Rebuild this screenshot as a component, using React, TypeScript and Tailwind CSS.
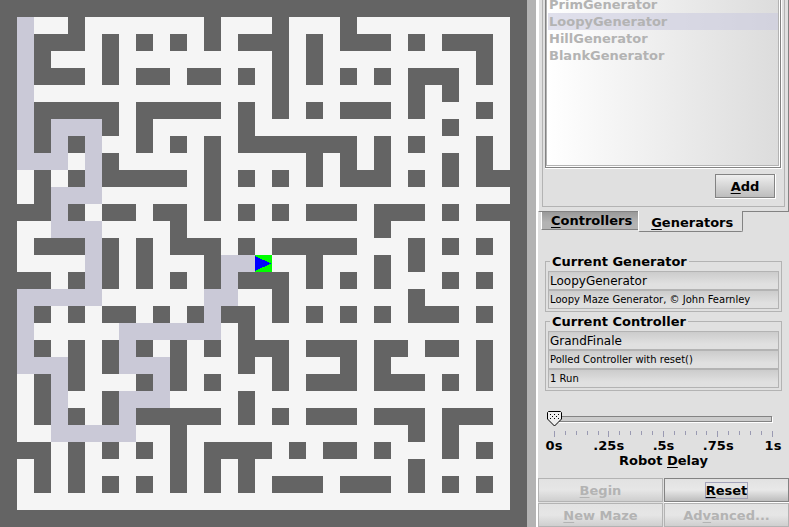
import { useState, type ReactNode } from 'react';

const MAZE = [
  '###############################',
  '#o..#.......#...#...#.........#',
  '#o###.#.#.#.#.###.#.###.#.###.#',
  '#o#...#.........#.#.........#.#',
  '#o###.#.##.##.#.#.#.#.#.###.#.#',
  '#o..............#.......#.#...#',
  '#o#####.#####.#.#.#.###.#...#.#',
  '#o#ooo#.#.....#...........#...#',
  '#o#o#o..#.#.#.#######.#.#...#.#',
  '#ooo.o#.....#.....#.#.#...#.#.#',
  '#.#.#o#####.#.#.#.#.###.#.#.###',
  '#.#ooo......#.................#',
  '###o#.##.##.#.#.#.###.###.#.###',
  '#..ooo....#...........#.......#',
  '#.###o#.#.###.#.#####...#.#.#.#',
  '#....o#.#...#oo...#...#.#.....#',
  '###.#o#.#.#.#o###.#.#.#...#.#.#',
  '#ooooo......oo..#.......#.....#',
  '#o#.#.##.#.#o##.#.#.#.#.###.#.#',
  '#o.....oooooo.#...............#',
  '#o#.#.#o#.#.#.###.###.##.##.#.#',
  '#ooo#.#ooo#...#.#...#.#.....#.#',
  '#.#o#...#o#.#...#.###.###.#.#.#',
  '#.#o..#ooo....#...............#',
  '#.#o#.#o#####.#.#.###.###.###.#',
  '#..ooooo..#.............#.#...#',
  '###.#.#.#.#.####.#.##.#...#.#.#',
  '#.#.#.....#.#.#.........#.....#',
  '#.#.#.#.#.#.#.#.###.###.#.#.#.#',
  '#.............................#',
  '###############################',
];
const CELL = 17;
const FILLS: Record<string, string> = { '#': '#646464', o: '#cac9d7' };
const ROBOT = { x: 15, y: 15 };

function Maze() {
  const size = MAZE.length * CELL;
  return (
    <svg
      className="block w-[527px] shrink-0 self-start"
      viewBox={`0 0 ${size} ${size}`}
      shapeRendering="crispEdges"
      role="img"
      aria-label="Maze"
    >
      <rect width={size} height={size} fill="#f5f5f5" />
      {MAZE.flatMap((row, y) =>
        Array.from(row.matchAll(/#+|o+/g), (run) => (
          <rect
            key={`${y}-${run.index}`}
            x={run.index * CELL}
            y={y * CELL}
            width={run[0].length * CELL}
            height={CELL}
            fill={FILLS[run[0][0]]}
          />
        )),
      )}
      <g transform={`translate(${ROBOT.x * CELL} ${ROBOT.y * CELL})`}>
        <rect width={CELL} height={CELL} fill="#00ff00" />
        <path d="M0 1 L16 8.5 L0 16 Z" fill="#0000ff" />
      </g>
    </svg>
  );
}

function Key({ children }: { children: ReactNode }) {
  return <span className="underline decoration-1 underline-offset-2">{children}</span>;
}

const GENERATORS = ['PrimGenerator', 'LoopyGenerator', 'HillGenerator', 'BlankGenerator'];

function GeneratorPanel() {
  return (
    <div className="flex min-h-0 flex-1 flex-col border-r border-b border-l border-r-[#838383] border-b-[#838383] border-l-white px-[3px] pb-1">
      <div className="flex min-h-0 flex-1 flex-col border-x border-b border-[#b3b3b3] px-0.5 pb-[7px]">
        <div className="min-h-0 flex-1 overflow-hidden border-r border-b border-white">
          <div className="h-full border-r border-b border-l border-[#838383]">
            <div className="h-full border-r border-b border-white">
              <div className="h-full overflow-hidden border-x border-b border-[#b3b3b3] bg-linear-to-r from-white to-[#dcdcdc] pl-px">
                <ul className="-mt-1 text-[#b3b3b3]">
                  {GENERATORS.map((name) => (
                    <li
                      key={name}
                      className={
                        name === 'LoopyGenerator'
                          ? 'h-[17px] bg-[#ccccdf]/60 pl-px leading-[17px]'
                          : 'h-[17px] pl-px leading-[17px]'
                      }
                    >
                      {name}
                    </li>
                  ))}
                </ul>
              </div>
            </div>
          </div>
        </div>
        <div className="flex justify-end pt-[5px] pr-1.5">
          <div className="border-r border-b border-white">
            <button className="block h-6 w-[60px] border border-[#838383] bg-linear-to-b from-[#efefef] to-[#bdbdbd] pt-px font-bold">
              <Key>A</Key>dd
            </button>
          </div>
        </div>
      </div>
    </div>
  );
}

function Tabs() {
  return (
    <div role="tablist" className="flex items-start pl-[3px]">
      <button
        role="tab"
        aria-selected={false}
        className="h-[18px] border-b border-l border-b-[#838383] border-l-white bg-linear-to-b from-[#999999] to-[#b3b3b3] to-60% pr-1.5 pl-[9px] leading-4"
      >
        <Key>C</Key>ontrollers
      </button>
      <button
        role="tab"
        aria-selected={true}
        className="relative -mt-px h-[21px] rounded-b-[2px] border-r border-b border-l border-r-[#838383] border-b-[#838383] border-l-white bg-[#e0e0e0] pt-1 pr-[9px] pl-3 leading-4"
      >
        <Key>G</Key>enerators
      </button>
    </div>
  );
}

type Line = { label: string; value: string; small?: boolean };

function InfoBox({ title, lines }: { title: string; lines: Line[] }) {
  return (
    <fieldset className="border border-[#b3b3b3] px-0.5 pt-px pb-0.5">
      <legend className="ml-0.5 h-[17px] px-0.5 leading-[17px]">{title}</legend>
      <div className="flex flex-col">
        {lines.map((line) => (
          <input
            key={line.label}
            aria-label={line.label}
            readOnly
            value={line.value}
            className={
              line.small
                ? 'h-[19px] w-full border border-[#b3b3b3] bg-linear-to-b from-[#cccccc] to-[#e0e0e0] to-70% px-px text-[10px] font-normal outline-none'
                : 'h-[19px] w-full border border-[#b3b3b3] bg-linear-to-b from-[#cccccc] to-[#e0e0e0] to-70% px-px text-[12px] font-normal outline-none'
            }
          />
        ))}
      </div>
    </fieldset>
  );
}

const TICKS = Array.from({ length: 21 }, (_, i) => i);

function DelaySlider() {
  const [delay, setDelay] = useState(0);
  return (
    <div className="px-4 pt-5">
      <div className="relative h-[17px] pt-[5px] pr-px">
        <input
          id="delay"
          type="range"
          min={0}
          max={100}
          value={delay}
          onChange={(e) => setDelay(Number(e.target.value))}
          className="block h-1.5 w-full appearance-none border border-[#838383] bg-[#cccccc] shadow-[1px_1px_0_white] outline-none [&::-webkit-slider-thumb]:size-1 [&::-webkit-slider-thumb]:appearance-none [&::-webkit-slider-thumb]:opacity-0"
        />
        <svg
          className="pointer-events-none absolute top-0 -ml-[7px] h-4 w-[15px]"
          style={{ left: `${delay}%` }}
          viewBox="0 0 15 16"
        >
          <path d="M1.5 .5h12l1 1v6.5l-7 7l-7-7v-6.500z" fill="#eeeeee" stroke="#000000" />
          <path
            d="M3 3h1v1h-1zM7 3h1v1h-1zM11 3h1v1h-1zM5 5h1v1h-1zM9 5h1v1h-1zM3 7h1v1h-1zM7 7h1v1h-1zM11 7h1v1h-1z"
            fill="#000000"
          />
        </svg>
      </div>
      <div className="mt-[3px] flex h-1.5 items-start justify-between">
        {TICKS.map((i) => (
          <span key={i} className={i % 5 === 0 ? 'h-1.5 w-px bg-[#9a9ab2]' : 'h-1 w-px bg-[#9a9ab2]'} />
        ))}
      </div>
      <div className="mt-px flex justify-between leading-[15px]">
        {['0s', '.25s', '.5s', '.75s', '1s'].map((t) => (
          <span key={t} className="flex w-0 justify-center">
            {t}
          </span>
        ))}
      </div>
      <label htmlFor="delay" className="block text-center leading-[15px]">
        Robot <Key>D</Key>elay
      </label>
    </div>
  );
}

const disabledButton =
  'h-6 border border-[#b3b3b3] bg-linear-to-b from-[#e2e2e2] via-[#e6e6e6] to-[#cfcfcf] pt-px text-[#b3b3b3]';

function Actions() {
  return (
    <div className="grid grid-cols-2 gap-px">
      <button disabled className={disabledButton}>
        <Key>B</Key>egin
      </button>
      <button className="flex h-6 items-center justify-center border border-[#838383] bg-linear-to-b from-[#e2e2e2] via-[#e8e8e8] to-[#bdbdbd] pt-px shadow-[0_1px_0_white]">
        <span className="border border-[#a3a3bb] leading-[15px]">
          <Key>R</Key>eset
        </span>
      </button>
      <button disabled className={disabledButton}>
        <Key>N</Key>ew Maze
      </button>
      <button disabled className={disabledButton}>
        Ad<Key>v</Key>anced...
      </button>
    </div>
  );
}

export default function App() {
  return (
    <main className="flex h-screen overflow-hidden bg-[#e0e0e0] font-['DejaVu_Sans',sans-serif] text-[13px] font-bold text-black">
      <Maze />
      <div className="w-[9px] shrink-0 bg-[#b3b3b3]" />
      <div className="w-0.5 shrink-0 bg-white" />
      <aside className="flex min-w-0 flex-1 flex-col">
        <GeneratorPanel />
        <Tabs />
        <div className="flex flex-col gap-px px-[7px] pt-[21px]">
          <InfoBox
            title="Current Generator"
            lines={[
              { label: 'Generator', value: 'LoopyGenerator' },
              { label: 'Description', value: 'Loopy Maze Generator, © John Fearnley', small: true },
            ]}
          />
          <InfoBox
            title="Current Controller"
            lines={[
              { label: 'Controller', value: 'GrandFinale' },
              { label: 'Type', value: 'Polled Controller with reset()', small: true },
              { label: 'Runs', value: '1 Run', small: true },
            ]}
          />
        </div>
        <DelaySlider />
        <div className="mt-2.5">
          <Actions />
        </div>
      </aside>
    </main>
  );
}
